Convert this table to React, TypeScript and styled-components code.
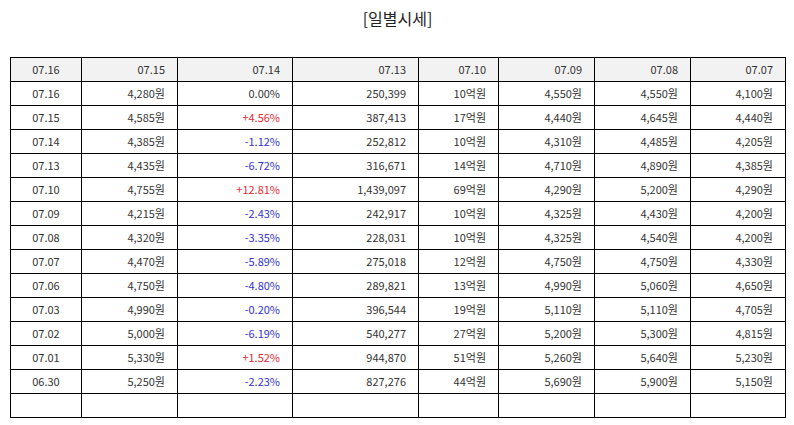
import styled, { createGlobalStyle } from "styled-components";

const GlobalStyle = createGlobalStyle`
  body {
    margin: 0;
    background: #fff;
    font-family: "Noto Sans CJK KR", "Noto Sans", sans-serif;
    color: #333;
  }
`;

const Page = styled.div`
  width: 794px;
  padding: 0 9px 0 10px;
  box-sizing: border-box;
`;

const Title = styled.h2`
  margin: 0;
  height: 57px;
  padding-top: 6px;
  box-sizing: border-box;
  text-align: center;
  font-size: 16px;
  font-weight: 400;
  color: #222;
`;

const Table = styled.table`
  width: 775px;
  border-collapse: collapse;
  table-layout: fixed;
  font-size: 11px;
`;

const Cell = styled.td<{ $center?: boolean; $tone?: "up" | "down" }>`
  height: 23px;
  border: 1px solid #000;
  text-align: ${(p) => (p.$center ? "center" : "right")};
  color: ${(p) =>
    p.$tone === "up" ? "#e02b35" : p.$tone === "down" ? "#3333cc" : "#333"};
  white-space: nowrap;
  line-height: 1;
  padding: 0 ${(p) => (p.$center ? "0" : "12px")} 0 ${(p) => (p.$center ? "0" : "4px")};
`;

const HeadCell = styled(Cell).attrs({ as: "th" })`
  background: #f2f2f2;
  font-weight: 400;
`;

const widths = [71, 96, 115, 126, 80, 96, 96, 95];
const head = ["07.16", "07.15", "07.14", "07.13", "07.10", "07.09", "07.08", "07.07"];

type Row = [string, string, string, string, string, string, string, string];

const rows: Row[] = [
  ["07.16", "4,280원", "0.00%", "250,399", "10억원", "4,550원", "4,550원", "4,100원"],
  ["07.15", "4,585원", "+4.56%", "387,413", "17억원", "4,440원", "4,645원", "4,440원"],
  ["07.14", "4,385원", "-1.12%", "252,812", "10억원", "4,310원", "4,485원", "4,205원"],
  ["07.13", "4,435원", "-6.72%", "316,671", "14억원", "4,710원", "4,890원", "4,385원"],
  ["07.10", "4,755원", "+12.81%", "1,439,097", "69억원", "4,290원", "5,200원", "4,290원"],
  ["07.09", "4,215원", "-2.43%", "242,917", "10억원", "4,325원", "4,430원", "4,200원"],
  ["07.08", "4,320원", "-3.35%", "228,031", "10억원", "4,325원", "4,540원", "4,200원"],
  ["07.07", "4,470원", "-5.89%", "275,018", "12억원", "4,750원", "4,750원", "4,330원"],
  ["07.06", "4,750원", "-4.80%", "289,821", "13억원", "4,990원", "5,060원", "4,650원"],
  ["07.03", "4,990원", "-0.20%", "396,544", "19억원", "5,110원", "5,110원", "4,705원"],
  ["07.02", "5,000원", "-6.19%", "540,277", "27억원", "5,200원", "5,300원", "4,815원"],
  ["07.01", "5,330원", "+1.52%", "944,870", "51억원", "5,260원", "5,640원", "5,230원"],
  ["06.30", "5,250원", "-2.23%", "827,276", "44억원", "5,690원", "5,900원", "5,150원"],
];

const toneOf = (v: string): "up" | "down" | undefined =>
  v.startsWith("+") ? "up" : v.startsWith("-") ? "down" : undefined;

export default function App() {
  return (
    <Page>
      <GlobalStyle />
      <Title>[일별시세]</Title>
      <Table>
        <colgroup>
          {widths.map((w, i) => (
            <col key={i} style={{ width: w }} />
          ))}
        </colgroup>
        <thead>
          <tr>
            {head.map((h, i) => (
              <HeadCell key={i} $center={i === 0}>
                {h}
              </HeadCell>
            ))}
          </tr>
        </thead>
        <tbody>
          {rows.map((r) => (
            <tr key={r[0]}>
              {r.map((v, i) => (
                <Cell key={i} $center={i === 0} $tone={i === 2 ? toneOf(v) : undefined}>
                  {v}
                </Cell>
              ))}
            </tr>
          ))}
          <tr>
            {widths.map((_, i) => (
              <Cell key={i} />
            ))}
          </tr>
        </tbody>
      </Table>
    </Page>
  );
}
